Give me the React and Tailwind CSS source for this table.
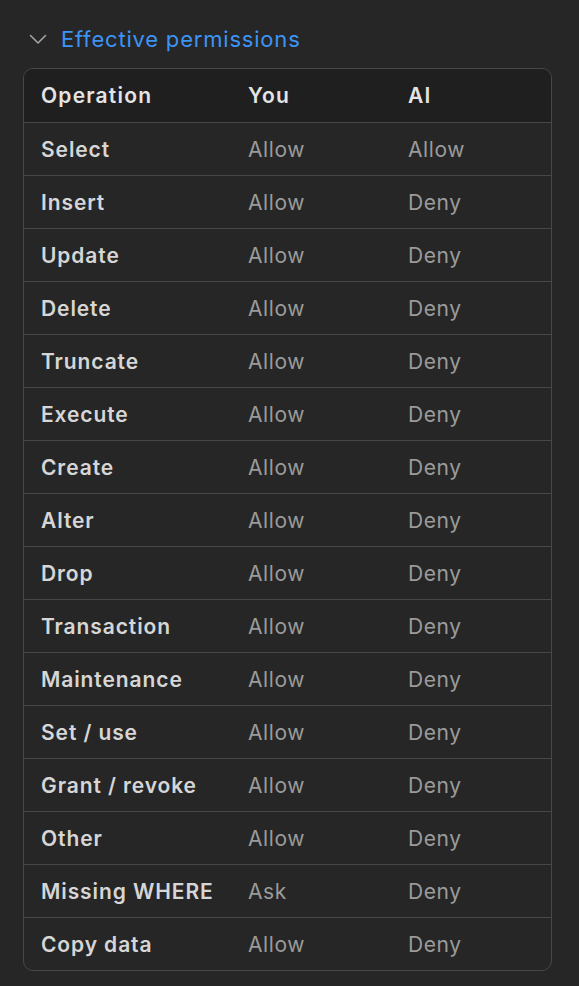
import React from 'react';

const rows = [
  ['Select', 'Allow', 'Allow'],
  ['Insert', 'Allow', 'Deny'],
  ['Update', 'Allow', 'Deny'],
  ['Delete', 'Allow', 'Deny'],
  ['Truncate', 'Allow', 'Deny'],
  ['Execute', 'Allow', 'Deny'],
  ['Create', 'Allow', 'Deny'],
  ['Alter', 'Allow', 'Deny'],
  ['Drop', 'Allow', 'Deny'],
  ['Transaction', 'Allow', 'Deny'],
  ['Maintenance', 'Allow', 'Deny'],
  ['Set / use', 'Allow', 'Deny'],
  ['Grant / revoke', 'Allow', 'Deny'],
  ['Other', 'Allow', 'Deny'],
  ['Missing WHERE', 'Ask', 'Deny'],
  ['Copy data', 'Allow', 'Deny'],
];

const App = () => {
  return (
    <div
      className="min-h-screen bg-[#262626] pt-[22px] pb-[14px]"
      style={{ fontFamily: 'Inter, "Liberation Sans", sans-serif' }}
    >
      {/* Section toggle */}
      <div className="flex items-center h-[34px] pl-[28px] gap-[13px]">
        <svg width="20" height="20" viewBox="0 0 20 20" fill="none" className="text-[#a3a3a3]">
          <path d="M2.5 6.5 L10 14 L17.5 6.5" stroke="currentColor" strokeWidth="1.6" strokeLinecap="round" strokeLinejoin="round" />
        </svg>
        <span className="text-[22px] text-[#3d94f6] tracking-[0.8px]">Effective permissions</span>
      </div>

      {/* Permissions table */}
      <div className="mx-[23px] mt-[12px] w-[529px] border border-[#474747] rounded-[10px] overflow-hidden">
        <div className="flex items-center h-[53px] pt-[1px] bg-[#1f1f1f] text-[21px] font-semibold text-[#e4e4e4] tracking-[1.2px]">
          <div className="w-[224px] pl-[17px]">Operation</div>
          <div className="w-[160px]">You</div>
          <div className="flex-1">AI</div>
        </div>
        {rows.map(([op, you, ai]) => (
          <div key={op} className="flex items-center h-[53px] pt-[1px] border-t border-[#474747] text-[21px] tracking-[0.6px]">
            <div className="w-[224px] pl-[17px] font-semibold text-[#d6d6d6] tracking-[0.9px]">{op}</div>
            <div className="w-[160px] text-[#9b9b9b]">{you}</div>
            <div className="flex-1 text-[#9b9b9b]">{ai}</div>
          </div>
        ))}
      </div>
    </div>
  );
};

export default App;
